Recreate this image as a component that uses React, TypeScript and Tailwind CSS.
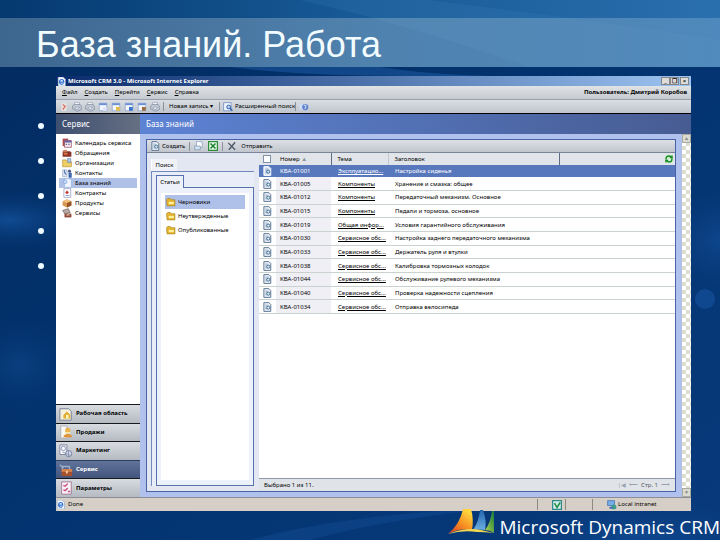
import { useState, type ReactNode } from "react";
import { RefreshCw } from "lucide-react";

interface Article {
  id: string;
  topic: string;
  title: string;
}

const articles: Article[] = [
  { id: "KBA-01001", topic: "Эксплуатацио...", title: "Настройка сиденья" },
  { id: "KBA-01005", topic: "Компоненты", title: "Хранение и смазка: общее" },
  { id: "KBA-01012", topic: "Компоненты", title: "Передаточный механизм. Основное" },
  { id: "KBA-01015", topic: "Компоненты", title: "Педали и тормоза, основное" },
  { id: "KBA-01019", topic: "Общая инфор...", title: "Условия гарантийного обслуживания" },
  { id: "KBA-01030", topic: "Сервисное обс...", title: "Настройка заднего передаточного механизма" },
  { id: "KBA-01033", topic: "Сервисное обс...", title: "Держатель руля и втулки" },
  { id: "KBA-01038", topic: "Сервисное обс...", title: "Калибровка тормозных колодок" },
  { id: "KBA-01044", topic: "Сервисное обс...", title: "Обслуживание рулевого механизма" },
  { id: "KBA-01040", topic: "Сервисное обс...", title: "Проверка надежности сцепления" },
  { id: "KBA-01034", topic: "Сервисное обс...", title: "Отправка велосипеда" },
];

const menu = ["Файл", "Создать", "Перейти", "Сервис", "Справка"];
const folders = ["Черновики", "Неутвержденные", "Опубликованные"];

function Svg({ children, className = "h-[10px] w-[10px]" }: { children: ReactNode; className?: string }) {
  return (
    <svg viewBox="0 0 16 16" className={`shrink-0 ${className}`} aria-hidden="true">
      {children}
    </svg>
  );
}

function BrowserIcon() {
  return (
    <Svg className="h-[9px] w-[9px]">
      <path d="M2 0h9l4 4v12H2z" fill="#f4f8ff" stroke="#7f98c4" />
      <path d="M12 9H4.500c0-3 2-4.500 4-4.500S12 6 12 9zM4.500 9c0 4 5 5 7 2.500" fill="none" stroke="#2b6fd0" strokeWidth="2" />
    </Svg>
  );
}

function PageIcon({ light = false }: { light?: boolean }) {
  return (
    <Svg>
      <path d="M3 1h8l3 3v11H3z" fill={light ? "#dfe8fa" : "#eef3fa"} stroke={light ? "#ffffff" : "#56708f"} strokeWidth="1.500" />
      <path d="M5 5h5M5 8h4M5 11h3" stroke="#6d8cab" />
      <circle cx="10" cy="9" r="2.500" fill="none" stroke="#38678c" strokeWidth="1.500" />
    </Svg>
  );
}

function FolderIcon() {
  return (
    <Svg className="h-[9px] w-[10px]">
      <path d="M0 3l2-2h5l2 2h6v11H1z" fill="#e5b52f" stroke="#9c7413" />
      <path d="M4 7h9v4H4z" fill="#fff0a0" />
    </Svg>
  );
}

function HelpDoc() {
  return (
    <Svg>
      <path d="M1 3h7v9H1z" fill="#cfdcf5" />
      <circle cx="10" cy="8" r="5" fill="#5f83cf" />
      <path d="M8 6c1-2 4-1 3 1l-1 2v2" fill="none" stroke="#fff" strokeWidth="1.500" />
    </Svg>
  );
}

function GearIcon() {
  return (
    <Svg>
      <path d="M4 1h8v5H4z" fill="#f5f8fc" stroke="#8d9cb4" />
      <path d="M1 6l3-2h9l2 3v5l-6 3-8-4z" fill="#c3cbd7" stroke="#737f90" />
      <path d="M5 8h7l-3 4-4-2z" fill="#f0f3f8" stroke="#8391a8" />
    </Svg>
  );
}

function WindowIcon({ accent }: { accent: string }) {
  return (
    <Svg>
      <path d="M2 2h12v12H2z" fill="#f3f6fc" stroke="#7b93c5" />
      <path d="M2 2h12v3H2z" fill="#6b8fd6" />
      <path d="M8 8h6v6H8z" fill={accent} />
    </Svg>
  );
}

const sections = [
  {
    label: "Календарь сервиса",
    icon: (
      <Svg>
        <path d="M1 1h9v12H1z" fill="#ad4b4d" />
        <path d="M4 4h11v11H4z" fill="#f0e5ea" stroke="#8a3f55" />
        <path d="M4 4h11v3H4zM6 9h2v2H6zM10 9h2v2h-2z" fill="#6663a0" />
      </Svg>
    ),
  },
  {
    label: "Обращения",
    icon: (
      <Svg>
        <path d="M1 5h12l2 2v7H1z" fill="#8a3427" />
        <path d="M2 3h6v4H2z" fill="#c9805d" />
        <path d="M3 8h6v3H3z" fill="#d56b45" />
      </Svg>
    ),
  },
  {
    label: "Организации",
    icon: (
      <Svg>
        <path d="M1 3h6l2 3h6v8H1z" fill="#eecf66" stroke="#b48c24" />
        <path d="M9 1h5v6H9z" fill="#b8cce8" stroke="#587dae" />
      </Svg>
    ),
  },
  {
    label: "Контакты",
    icon: (
      <Svg>
        <path d="M1 3h7v11H1z" fill="#dde5f3" stroke="#8ca0c4" />
        <path d="M4 3v5l3 3M11 8h4v7h-4z" fill="#3e65ad" stroke="#3e65ad" />
        <circle cx="12" cy="5" r="2.500" fill="#4e5c88" />
      </Svg>
    ),
  },
  {
    label: "База знаний",
    icon: (
      <Svg>
        <path d="M4 1h8l3 3v11H4z" fill="#eef5ff" stroke="#8fabdc" />
        <circle cx="5" cy="6" r="3" fill="#c4dcfb" stroke="#789bd0" />
      </Svg>
    ),
  },
  {
    label: "Контракты",
    icon: (
      <Svg>
        <path d="M3 1h11v14H3z" fill="#fff" stroke="#7f87b6" />
        <path d="M8 4l3 3-3 3-3-3z" fill="#cc3434" />
        <path d="M6 12h6" stroke="#465fa5" />
      </Svg>
    ),
  },
  {
    label: "Продукты",
    icon: (
      <Svg>
        <path d="M1 5l7-3 7 3v7l-7 3-7-3z" fill="#d79552" />
        <path d="M1 5l7 3 7-3-7-3z" fill="#f1c480" />
        <path d="M8 8v7l7-3V5z" fill="#985527" />
      </Svg>
    ),
  },
  {
    label: "Сервисы",
    icon: (
      <Svg>
        <path d="M1 4l9-3 3 6-8 3z" fill="#b8aaa5" stroke="#5f4b48" />
        <path d="M4 9h11v6H4z" fill="#8c4736" />
        <path d="M7 11h5" stroke="#ebcdb2" strokeWidth="2" />
      </Svg>
    ),
  },
];

const areas = [
  {
    label: "Рабочая область",
    icon: (
      <Svg className="h-[14px] w-[14px]">
        <path d="M1 2h10l3 3v10H1z" fill="#f4f0dc" stroke="#6e7891" />
        <path d="M5 13V9l4-4 4 4v4z" fill="#e1ac32" />
        <path d="M8 9h3v4H8z" fill="#fff5b5" />
      </Svg>
    ),
  },
  {
    label: "Продажи",
    icon: (
      <Svg className="h-[14px] w-[14px]">
        <path d="M2 1h7v14H2z" fill="#f7f7f4" stroke="#a9abb0" />
        <circle cx="10" cy="6" r="3" fill="#eab44a" />
        <path d="M5 14c0-5 10-5 10 0z" fill="#e29336" />
        <path d="M6 9h7" stroke="#fff1b3" strokeWidth="1.500" />
      </Svg>
    ),
  },
  {
    label: "Маркетинг",
    icon: (
      <Svg className="h-[14px] w-[14px]">
        <path d="M1 1h8v11H1z" fill="#f7f8fd" stroke="#767e9d" />
        <circle cx="5" cy="5" r="2.500" fill="none" stroke="#848eac" />
        <circle cx="11" cy="11" r="3.500" fill="#dce2f2" stroke="#657194" />
        <path d="M4 9l9 4M11 8v6" stroke="#7d88a6" />
      </Svg>
    ),
  },
  {
    label: "Сервис",
    icon: (
      <Svg className="h-[14px] w-[14px]">
        <path d="M4 7V4h8v3M1 2l4 4" fill="none" stroke="#9fb0cc" strokeWidth="1.500" />
        <path d="M3 7h12v8H3z" fill="#a5512b" />
        <path d="M3 7h12v3H3z" fill="#d88850" />
        <path d="M8 9h2v3H8z" fill="#f4d8a8" />
      </Svg>
    ),
  },
  {
    label: "Параметры",
    icon: (
      <Svg className="h-[14px] w-[14px]">
        <path d="M3 1h11v14H3z" fill="#faf2f7" stroke="#a3728f" />
        <path d="M5 5l2 1 3-3M5 10l2 1 3-3" fill="none" stroke="#c34476" strokeWidth="1.500" />
        <path d="M10 12h3" stroke="#b66b93" strokeWidth="2" />
      </Svg>
    ),
  },
];

function Backdrop() {
  return (
    <svg viewBox="0 0 720 540" preserveAspectRatio="none" className="absolute inset-0 h-full w-full" aria-hidden="true">
      <defs>
        <linearGradient id="base" x1="0" y1="0" x2="1" y2="1">
          <stop offset="0" stopColor="#022b60" />
          <stop offset="0.500" stopColor="#033470" />
          <stop offset="1" stopColor="#083a7c" />
        </linearGradient>
        <linearGradient id="sky" x1="0" x2="1">
          <stop offset="0" stopColor="#04396f" />
          <stop offset="0.500" stopColor="#185a97" />
          <stop offset="1" stopColor="#2a6fae" />
        </linearGradient>
        <radialGradient id="glow">
          <stop offset="0" stopColor="#1a5eae" stopOpacity="0.600" />
          <stop offset="1" stopColor="#0a4185" stopOpacity="0" />
        </radialGradient>
      </defs>
      <rect width="720" height="540" fill="url(#base)" />
      <rect width="720" height="67" fill="url(#sky)" />
      <path d="M300 0c90 20 180 50 230 67h190V40C600 20 500 10 430 0z" fill="#3c82bb" opacity="0.200" />
      <path d="M230 67c60 8 130 9 200 9h60c-60-2-90-6-110-9z" fill="#1a569c" opacity="0.600" />
      <ellipse cx="10" cy="220" rx="80" ry="30" fill="url(#glow)" />
      <ellipse cx="20" cy="365" rx="60" ry="50" fill="url(#glow)" opacity="0.500" />
      <ellipse cx="720" cy="240" rx="60" ry="50" fill="url(#glow)" opacity="0.700" />
      <circle cx="705" cy="299" r="10" fill="#15509a" opacity="0.700" />
      <path d="M250 540c60-16 120-24 190-29h30c-70 8-120 18-160 29z" fill="#114a92" opacity="0.500" />
      <ellipse cx="640" cy="535" rx="140" ry="34" fill="url(#glow)" opacity="0.700" />
    </svg>
  );
}

function Divider() {
  return <span className="h-[9px] w-px shrink-0 bg-[#8b919b]" />;
}

function Toolbar() {
  return (
    <div className="flex h-[14px] items-center gap-[3px] border-b border-black bg-linear-to-b from-[#dadee3] to-[#bfc5cd] pl-[3px] text-[6px]">
      <Svg>
        <path d="M4 2h8v12H4z" fill="#efe4e2" />
        <path d="M6 4l4 3-4 5" fill="none" stroke="#d27164" strokeWidth="2" />
      </Svg>
      <GearIcon />
      <GearIcon />
      <WindowIcon accent="#dce6f8" />
      <WindowIcon accent="#e3bd45" />
      <WindowIcon accent="#3b72cb" />
      <WindowIcon accent="#9d6a39" />
      <GearIcon />
      <Divider />
      <button className="ml-[2px] w-[47px] shrink-0 text-left whitespace-nowrap">Новая запись ▾</button>
      <Divider />
      <button className="flex w-[69px] shrink-0 items-center gap-[2px] whitespace-nowrap">
        <Svg>
          <path d="M1 1h12v13H1z" fill="#eff4fd" stroke="#5476b7" />
          <circle cx="9" cy="8" r="3" fill="#bcd6f8" stroke="#295ca7" strokeWidth="1.500" />
          <path d="M11 10l4 4" stroke="#295ca7" strokeWidth="2" />
        </Svg>
        Расширенный поиск
      </button>
      <Divider />
      <HelpDoc />
    </div>
  );
}

function Sidebar() {
  return (
    <aside className="flex w-[84px] shrink-0 flex-col bg-white">
      <h2 className="h-5 bg-linear-to-r from-[#3f4f70] to-[#667083] pl-[6px] text-[8px] leading-[19px] text-white">Сервис</h2>
      <nav className="flex h-[81px] flex-col px-[3px] pt-[4px]">
        {sections.map(({ label, icon }) => (
          <a
            key={label}
            href="#"
            className={`flex flex-1 items-center gap-[3px] pl-[3px] text-[6px] leading-[9px] whitespace-nowrap ${
              label === "База знаний" ? "bg-[#b0c1e7]" : ""
            }`}
          >
            {icon}
            {label}
          </a>
        ))}
      </nav>
      <nav className="mt-auto grid h-[93px] grid-rows-5">
        {areas.map(({ label, icon }) => (
          <button
            key={label}
            className={`flex items-center gap-[3px] border-t pl-[3px] text-left text-[6px] font-bold whitespace-nowrap ${
              label === "Сервис"
                ? "border-[#2c3c5c] bg-linear-to-b from-[#60739a] to-[#43557c] text-white"
                : "border-[#17191d] bg-linear-to-b from-[#d8dce0] to-[#b5bac2]"
            }`}
          >
            {icon}
            {label}
          </button>
        ))}
      </nav>
    </aside>
  );
}

function SearchPane() {
  const [folder, setFolder] = useState("Черновики");

  return (
    <section className="flex w-[112px] shrink-0 flex-col bg-[#e3e7f1] pt-[6px] pr-[5px] pb-[5px] pl-[4px]">
      <button className="h-[12px] w-[26px] border-l border-white bg-[#f0f2f8] text-center text-[6px]">Поиск</button>
      <div className="flex flex-1 flex-col border-t border-l border-[#7289bd] bg-[#e9edf7] pt-[3px] pl-[4px]">
        <button className="z-10 -mb-px h-[13px] w-[28px] border border-b-0 border-[#5671ae] bg-[#eef1f9] text-[6px] leading-[11px]">
          Статьи
        </button>
        <div className="flex flex-1 flex-col border border-[#5671ae] bg-[#edf1fa] px-[4px] pt-[5px] pb-[5px]">
          <div className="flex-1 bg-white px-[4px] pt-[2px]">
            {folders.map((name) => (
              <button
                key={name}
                onClick={() => setFolder(name)}
                className={`flex h-[14px] w-full items-center gap-[2px] pl-[1px] text-[6px] ${
                  name === folder ? "bg-[#afc1e8]" : ""
                }`}
              >
                <FolderIcon />
                {name}
              </button>
            ))}
          </div>
        </div>
      </div>
    </section>
  );
}

function ArticleTable() {
  const [selected, setSelected] = useState("KBA-01001");

  return (
    <table className="h-[161px] w-full table-fixed border-collapse text-left text-[6px] leading-[8px] whitespace-nowrap">
      <colgroup>
        <col className="w-[17px]" />
        <col className="w-[55px]" />
        <col className="w-[57px]" />
        <col className="w-[171px]" />
        <col />
      </colgroup>
      <thead>
        <tr className="h-[12px] bg-[#e1e5ea]">
          <th>
            <input
              type="checkbox"
              aria-label="Выбрать все"
              className="ml-[4px] block h-[8px] w-[8px] appearance-none border border-[#8291a9] bg-white"
            />
          </th>
          <th className="pl-[4px] font-normal">
            Номер <span className="text-[#8b929c]">▲</span>
          </th>
          <th className="border-l border-[#5f6d88] pl-[6px] font-normal">Тема</th>
          <th className="border-l border-[#c2c8d3] pl-[6px] font-normal">Заголовок</th>
          <th className="border-l border-[#5f6d88] pr-[2px]">
            <button aria-label="Обновить" className="ml-auto block bg-[#d5f0d4]">
              <RefreshCw className="h-[8px] w-[8px] text-[#158a25]" strokeWidth={4} />
            </button>
          </th>
        </tr>
      </thead>
      <tbody>
        {articles.map(({ id, topic, title }) => {
          const active = id === selected;
          return (
            <tr
              key={id}
              onClick={() => setSelected(id)}
              className={active ? "bg-[#5878bd] text-white" : "border-b border-[#c9d2cf]"}
            >
              <td className="pl-[3px]">
                <PageIcon light={active} />
              </td>
              <td className={`pl-[4px] ${active ? "" : "bg-[#efeff5]"}`}>{id}</td>
              <td className="pl-[7px]">
                <a href="#" className="underline">
                  {topic}
                </a>
              </td>
              <td className="pl-[7px]">{title}</td>
              <td />
            </tr>
          );
        })}
      </tbody>
    </table>
  );
}

function KnowledgeBase() {
  return (
    <section className="flex min-w-0 flex-1 flex-col bg-[#b1c1ee]">
      <h2 className="h-5 bg-linear-to-r from-[#5d83d4] via-[#5270b4] to-[#475c92] pl-[6px] text-[8px] leading-[19px] text-white">
        База знаний
      </h2>
      <div className="flex flex-1">
        <div className="mx-[6px] mt-[5px] mb-[5px] flex min-w-0 flex-1 flex-col border border-[#4863a5]">
          <div className="flex h-[13px] items-center gap-[4px] border-b border-[#7a8597] bg-linear-to-b from-[#dde0e5] to-[#c1c6ce] pl-[3px] text-[6px]">
            <button className="flex items-center gap-[2px]">
              <PageIcon />
              Создать
            </button>
            <Divider />
            <button aria-label="Печать">
              <Svg>
                <path d="M4 1h9v9H4z" fill="#fff" stroke="#7294bf" />
                <path d="M1 8h9v6H1z" fill="#d2e3f2" stroke="#728ba9" />
              </Svg>
            </button>
            <button aria-label="Excel">
              <Svg>
                <path d="M1 1h14v14H1z" fill="#f1fff1" stroke="#2a8b39" strokeWidth="2" />
                <path d="M4 4l8 8M12 4l-8 8" stroke="#198030" strokeWidth="2.500" />
              </Svg>
            </button>
            <Divider />
            <button aria-label="Удалить">
              <Svg>
                <path d="M2 3l11 11M13 2L3 14" stroke="#485364" strokeWidth="2" />
              </Svg>
            </button>
            <button>Отправить</button>
          </div>
          <div className="flex flex-1">
            <SearchPane />
            <div className="flex min-w-0 flex-1 flex-col bg-white">
              <ArticleTable />
              <div className="mt-auto flex h-[13px] items-center justify-between border-t border-[#8f98a6] bg-[#e0e4e9] px-[5px] text-[6px]">
                <span>Выбрано 1 из 11.</span>
                <span className="flex gap-[3px] text-[#9ba2ad]">
                  <span>|◀</span>
                  <span>⟵</span>
                  <span className="text-[#4e555f]">Стр. 1</span>
                  <span>⟶</span>
                </span>
              </div>
            </div>
          </div>
        </div>
        <div className="flex w-[9px] shrink-0 flex-col justify-between bg-[repeating-conic-gradient(#dfddd0_0_25%,#fff_0_50%)] bg-[length:8px_8px]">
          <button aria-label="Вверх" className="h-[9px] border border-[#a9aba0] bg-[#dadbd1] text-[5px] leading-[7px] text-[#85887b]">
            ▲
          </button>
          <button aria-label="Вниз" className="h-[9px] border border-[#a9aba0] bg-[#dadbd1] text-[5px] leading-[7px] text-[#85887b]">
            ▼
          </button>
        </div>
      </div>
    </section>
  );
}

function StatusBar() {
  return (
    <div className="flex h-[14px] items-center border-t border-[#8c8c95] bg-[#d6cfc7] text-[6px]">
      <BrowserIcon />
      <span className="ml-[3px] flex-1">Done</span>
      <span className="flex h-[11px] w-[28px] items-center justify-end border-l border-[#8d8981] pr-[3px]">
        <Svg>
          <path d="M1 1h14v14H1z" fill="#d7edf0" stroke="#2f8c88" strokeWidth="2" />
          <path d="M4 5l4 7 5-8" fill="none" stroke="#209045" strokeWidth="2.500" />
        </Svg>
      </span>
      <span className="h-[11px] w-[27px] border-l border-[#8d8981]" />
      <span className="flex h-[11px] w-[99px] items-center gap-px border-l border-[#8d8981] pl-[14px]">
        <Svg>
          <path d="M1 1h11v8H1z" fill="#78aee8" stroke="#2d5fa2" />
          <circle cx="11" cy="11" r="4" fill="#3c9e8d" />
          <path d="M4 11h5v3H4z" fill="#3f68a8" />
        </Svg>
        Local intranet
      </span>
    </div>
  );
}

function CrmWindow() {
  return (
    <div className="flex min-w-0 flex-1 flex-col font-['Noto_Sans',sans-serif] text-black">
      <div className="flex h-[10px] items-center gap-[2px] bg-linear-to-r from-[#0a2b6c] to-[#9dc4f1] pl-[1px] text-[6px] font-bold text-white">
        <BrowserIcon />
        <span className="flex-1 whitespace-nowrap">Microsoft CRM 3.0 - Microsoft Internet Explorer</span>
        <div className="mr-[2px] flex text-[6px] leading-[6px] text-black">
          <button aria-label="Свернуть" className="h-[8px] w-[9px] border border-[#85868b] bg-[#dedcd8]">_</button>
          <button aria-label="Развернуть" className="h-[8px] w-[9px] border border-[#85868b] bg-[#dedcd8]">❐</button>
          <button aria-label="Закрыть" className="ml-[1px] h-[8px] w-[9px] border border-[#85868b] bg-[#dedcd8]">×</button>
        </div>
      </div>
      <div className="flex h-[14px] items-center border-b border-[#999fac] bg-linear-to-b from-[#e1e3e4] to-[#c5cad1] pr-[4px] pl-[6px] text-[6px]">
        <div className="flex flex-1 gap-[7px]">
          {menu.map((item) => (
            <button key={item} className="first-letter:underline">
              {item}
            </button>
          ))}
        </div>
        <span className="font-bold">Пользователь: Дмитрий Коробов</span>
      </div>
      <Toolbar />
      <div className="flex flex-1">
        <Sidebar />
        <KnowledgeBase />
      </div>
      <StatusBar />
    </div>
  );
}

function DynamicsLogo() {
  return (
    <svg viewBox="0 0 48 26" className="-mt-[2px] h-[26px] w-[48px] shrink-0" aria-hidden="true">
      <defs>
        <linearGradient id="sail" x1="0" y1="1" x2="0.700" y2="0">
          <stop offset="0" stopColor="#d8362a" />
          <stop offset="0.500" stopColor="#f58a22" />
          <stop offset="1" stopColor="#ffd83d" />
        </linearGradient>
        <linearGradient id="blue" x1="0" y1="0" x2="0" y2="1">
          <stop offset="0" stopColor="#2165ae" />
          <stop offset="1" stopColor="#6baee0" />
        </linearGradient>
        <linearGradient id="green" x1="0" y1="1" x2="1" y2="0">
          <stop offset="0" stopColor="#b5d44b" />
          <stop offset="1" stopColor="#137c3c" />
        </linearGradient>
      </defs>
      <path d="M15 0h8q3 10 1 21-14-2-24 4Q12 15 15 0z" fill="url(#sail)" />
      <path d="M32 1h3q4 11 2 20-6-1-12 0 6-9 7-20z" fill="url(#blue)" />
      <path d="M44 2h2v22q-4-3-9-3 6-8 7-19z" fill="url(#green)" />
      <path d="M0 25q18-7 33-4l13 3q-9-1-17-1-15-2-29 2z" fill="#f2d750" />
    </svg>
  );
}

export default function App() {
  return (
    <div className="relative flex min-h-screen flex-col overflow-hidden bg-[#04366f] font-['Liberation_Sans',sans-serif]">
      <Backdrop />
      <header className="relative mt-[18px] h-[49px] bg-linear-to-r from-[#a9b9c8]/35 via-[#b7cbd8]/35 to-[#a4c3dc]/30 pl-[36px]">
        <h1 className="text-[36px] leading-[54px] text-[#f2fcff]">База знаний. Работа</h1>
      </header>

      <main className="relative mt-[9px] flex flex-1 pr-[29px]">
        <ul className="flex h-[193px] w-14 shrink-0 flex-col justify-between pt-[47px] pl-[38px]">
          {[1, 2, 3, 4, 5].map((n) => (
            <li key={n} className="h-[6px] w-[6px] rounded-full bg-[#eefaff]" />
          ))}
        </ul>
        <CrmWindow />
      </main>

      <footer className="relative flex h-[29px] items-start justify-end gap-[3px] text-white">
        <DynamicsLogo />
        <span className="font-['Open_Sans',sans-serif] text-[19px] leading-[33px] whitespace-nowrap">
          Microsoft Dynamics CRM
        </span>
      </footer>
    </div>
  );
}
